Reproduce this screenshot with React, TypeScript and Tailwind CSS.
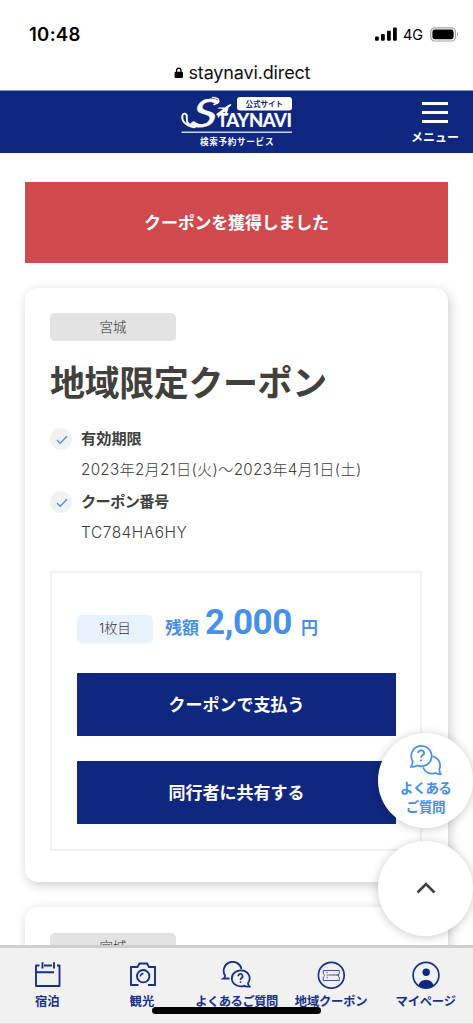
import type { ReactNode } from 'react'

const jp = "font-['Noto_Sans_CJK_JP',sans-serif]"

function StatusBar() {
  return (
    <div className="h-[90px] flex flex-col font-['Inter',sans-serif] text-black">
      <div className="h-[54px] pt-[14px] pl-[29px] pr-[14px] flex justify-between items-center">
        <span className="text-[18.5px] leading-[24px] font-semibold tracking-[0.3px]">10:48</span>
        <div className="flex items-center">
          <svg width="22" height="14" viewBox="0 0 22 14" fill="#000">
            <rect x="0" y="9.5" width="3.8" height="4.2" rx="1" />
            <rect x="6" y="7" width="3.8" height="6.7" rx="1" />
            <rect x="12" y="3.8" width="3.8" height="9.9" rx="1" />
            <rect x="18" y="0.4" width="3.8" height="13.3" rx="1" />
          </svg>
          <span className="mt-px ml-[6px] w-[20px] text-[14.5px] leading-[20px]">4G</span>
          <svg className="ml-[7px]" width="29" height="15" viewBox="0 0 29 15">
            <rect x="0.8" y="0.8" width="24.6" height="13.2" rx="4" fill="none" stroke="#a3a3a3" strokeWidth="1.2" />
            <rect x="2.4" y="2.5" width="21.2" height="9.8" rx="2.4" fill="#000" />
            <path d="M27 5.2c1.4.6 1.4 3.8 0 4.4z" fill="#a3a3a3" />
          </svg>
        </div>
      </div>
      <div className="h-[36px] flex justify-center items-center pl-[20px]">
        <svg className="mt-[2px] mr-[5px]" width="10" height="12" viewBox="0 0 10 12">
          <path d="M2.6 6V3.600a2.200 2.400 0 0 1 4.400 0V6" fill="none" stroke="#000" strokeWidth="1.300" />
          <rect x="0.600" y="4.800" width="8.400" height="6.200" rx="1.200" fill="#000" />
        </svg>
        <span className="mt-px w-[131px] text-[18px] leading-[24px] tracking-[-0.15px] text-[#111]">staynavi.direct</span>
      </div>
    </div>
  )
}

function Logo() {
  return (
    <svg width="114" height="56" viewBox="0 0 114 56" overflow="visible">
      <g fill="none" stroke="#fff" strokeLinecap="round" strokeLinejoin="round">
        <path d="M14 32.300C6 31 1.800 26 2.200 21.500C2.800 17 7.500 18 6.800 23C6.400 27 8.500 31 15 32" strokeWidth="1.900" />
        <path d="M34 9.500C40.500 8 40.500 2.500 32.500 2.500" strokeWidth="1.500" />
      </g>
      <text transform="translate(9.500 32) skewX(-10) scale(1.320 1)" fill="#fff" stroke="#fff" strokeWidth="0.300" fontFamily="Lato" fontStyle="italic" fontWeight="400" fontSize="39">S</text>
      <path d="M36 19.500L47.500 10.500C49 9.500 51 8.800 51.300 9.500C51.500 10.200 50 11.500 48.500 12.800L46.500 20.500L44.800 21L44.800 16.500L40 20L39 22.500L37.800 22.500L37.800 20.500Z M37.500 13.500L39 12.500L46 12.300L44 14Z" fill="#fff" />
      <text x="37" y="32" fill="#fff" stroke="#fff" strokeWidth="0.200" fontFamily="Lato" fontWeight="700" fontSize="18.500" textLength="75" lengthAdjust="spacing">TAYNAVI</text>
      <rect x="57" y="2" width="55" height="13.500" rx="3" fill="#fff" />
      <text x="65.500" y="11.800" fill="#10277f" fontFamily="Noto Sans CJK JP" fontWeight="700" fontSize="7.500" textLength="37.500">公式サイト</text>
      <rect x="1.500" y="36.600" width="110.500" height="1.200" fill="#fff" />
      <text x="20" y="50" fill="#fff" fontFamily="Noto Sans CJK JP" fontWeight="700" fontSize="8.600" textLength="73.500">検索予約サービス</text>
    </svg>
  )
}

function Header() {
  return (
    <header className="h-[63px] bg-[#10277f] border-t border-[#8793bf] flex justify-between">
      <div className="pt-[4px] pl-[180px]"><Logo /></div>
      <div className="flex flex-col items-center pt-[11px] w-[76px]">
        <div className="h-[20.500px] w-[26px] flex flex-col justify-between">
          <div className="h-[2.500px] bg-white" />
          <div className="h-[2.500px] bg-white" />
          <div className="h-[2.500px] bg-white" />
        </div>
        <span className="mt-[4px] text-[12px] leading-[20px] font-bold text-white whitespace-nowrap">メニュー</span>
      </div>
    </header>
  )
}

function InfoRow({ title, children }: { title: ReactNode; children: ReactNode }) {
  return (
    <div className="h-[63px] flex">
      <div className="mt-[6px] w-[22px] h-[22px] shrink-0 rounded-full bg-[#f1f1f1] flex items-center justify-center">
        <svg width="12" height="10" viewBox="0 0 12 10" className="mt-[2px] ml-px">
          <path d="M1 5L4.200 8.200L11 1.200" fill="none" stroke="#4690ea" strokeWidth="1.300" />
        </svg>
      </div>
      <div className="ml-[9px] whitespace-nowrap">
        <div className="h-[31px] text-[15.200px] leading-[31px] font-bold">{title}</div>
        <div className="h-[31px] leading-[31px] text-[#40403c]">{children}</div>
      </div>
    </div>
  )
}

function PrefBadge() {
  return (
    <div className="w-[126px] h-[28px] rounded-[5px] bg-[#e3e3e3] text-center text-[13.500px] leading-[27px] font-light text-[#333]">
      宮城
    </div>
  )
}

function CouponCard() {
  return (
    <section className="h-[594px] rounded-[13px] bg-white shadow-[2px_3px_12px_rgba(0,0,0,0.2)] pt-[25px] px-[25px] text-[#40403c]">
      <PrefBadge />
      <h1 className="mt-[14px] h-[52px] text-[35px] leading-[52px] tracking-[-0.400px] font-bold whitespace-nowrap">
        地域限定クーポン
      </h1>
      <div className="mt-[15px]">
        <InfoRow title="有効期限">
          <span className="font-['Inter','Noto_Sans_CJK_JP',sans-serif] font-light text-[15.200px] tracking-[0.310px]">
            2023年2月21日(火)〜2023年4月1日(土)
          </span>
        </InfoRow>
        <InfoRow title={<span className="tracking-[-0.600px]">クーポン番号</span>}>
          <span className="font-['Inter','Noto_Sans_CJK_JP',sans-serif] font-light text-[15.500px] tracking-[0.500px]">TC784HA6HY</span>
        </InfoRow>
      </div>
      <div className="mt-[23px] w-[372px] h-[280px] border-2 border-[#f1f1f1] pt-[22px] pl-[25px]">
        <div className="h-[54px] flex items-end text-[#4690ea] font-bold whitespace-nowrap">
          <div className="mb-[6px] w-[76px] h-[28px] rounded-[5px] bg-[#e8f2fc] text-center font-['Inter','Noto_Sans_CJK_JP',sans-serif] text-[13.300px] leading-[27px] font-light text-[#333]">
            1枚目
          </div>
          <span className="ml-[12px] mb-px w-[40px] text-[17px] leading-[42px]">残額</span>
          <span className="w-[96px] font-['Roboto',sans-serif] text-[35px] leading-[52px] tracking-[-0.400px]">2,000</span>
          <span className="mb-px text-[17px] leading-[42px]">円</span>
        </div>
        <button className="mt-[24px] block w-[319px] h-[63px] bg-[#10277f] text-white text-[17px] leading-[60px] font-bold pb-[2px]">
          クーポンで支払う
        </button>
        <button className="mt-[25px] block w-[319px] h-[63px] bg-[#10277f] text-white text-[17px] leading-[60px] font-bold pb-[2px]">
          同行者に共有する
        </button>
      </div>
    </section>
  )
}

function ChatIcon() {
  return (
    <svg width="34" height="32" viewBox="0 0 34 32" fill="none" stroke="#4690ea" strokeWidth="1.700" strokeLinejoin="round">
      <path d="M3.800 16.500A10.200 10.200 0 1 1 8.500 20.500C6.500 21.600 4.500 22 1.700 22C3 20.500 3.500 18.500 3.800 16.500Z" />
      <path d="M23.500 11.300A9.300 9.300 0 0 1 30.300 24.200C30.300 26 30.800 27.600 32 29.200C29.500 29.300 27.800 28.800 26.300 28A9.500 9.500 0 0 1 14 22.500" />
      <path d="M9.200 8.200A2.900 2.700 0 1 1 13 10.600Q12 11.200 12 12.800" strokeWidth="1.800" />
      <circle cx="12" cy="15.500" r="0.500" fill="#4690ea" strokeWidth="1.200" />
    </svg>
  )
}

function FloatingButtons() {
  return (
    <div className="absolute left-[378px] top-[733px] flex flex-col gap-[13px]">
      <button className="w-[95px] h-[95px] rounded-full bg-white shadow-[0_1px_10px_rgba(0,0,0,0.22)] flex flex-col items-center pt-[12px] text-[13.500px] leading-[19px] font-bold text-[#4690ea]">
        <ChatIcon />
        <span className="mt-px tracking-[-0.800px]">よくある</span>
        <span className="tracking-[-0.300px]">ご質問</span>
      </button>
      <button className="w-[95px] h-[95px] rounded-full bg-white shadow-[0_1px_10px_rgba(0,0,0,0.22)] flex items-center justify-center">
        <svg width="20" height="12" viewBox="0 0 20 12" className="mb-px">
          <path d="M1.500 10.500L10 2L18.500 10.500" fill="none" stroke="#40403c" strokeWidth="2.600" />
        </svg>
      </button>
    </div>
  )
}

function TabItem({ label, labelClass, children }: { label: string; labelClass: string; children: ReactNode }) {
  return (
    <a className="flex flex-col items-center pt-[13px]">
      <svg width="30" height="30" viewBox="0 0 30 30" fill="none" stroke="#16308c" strokeWidth="1.900">
        {children}
      </svg>
      <span className={`text-[12.300px] leading-[20px] font-bold text-[#16308c] whitespace-nowrap ${labelClass}`}>{label}</span>
    </a>
  )
}

function TabBar() {
  return (
    <nav className="absolute left-0 top-[945px] w-[473px] h-[79px] border-t-[3px] border-[#cfcfcf] bg-[#f1f1f1] grid grid-cols-5">
      <TabItem label="宿泊" labelClass="">
        <path d="M7.500 4.500H4V25H27.500V4.500H25M12 4.500H20M10.500 1.300V7.500M22 1.300V7.500M4 11.200H22" strokeLinejoin="round" />
      </TabItem>
      <TabItem label="観光" labelClass="">
        <path d="M11.500 24H4V6H10.500L12.500 2.500H20L22 6H28V24H21" />
        <circle cx="16.200" cy="15.200" r="6.200" />
        <path d="M13.300 15.500A3.500 3.500 0 0 1 16.500 12.500" strokeWidth="1.500" />
      </TabItem>
      <TabItem label="よくあるご質問" labelClass="tracking-[-0.500px]">
        <path d="M8.500 17.500H2.500Q4.200 16.500 4 14.500A9 9 0 1 1 20.500 8" strokeWidth="1.800" />
        <path d="M27 22A8.900 8 0 1 0 23 24.800C24.500 25.600 26.500 25.800 28.500 25.500Q27 24 27 22Z" strokeWidth="1.800" />
        <path d="M17.200 15.200A2.200 2.200 0 1 1 20.200 17.200Q19.500 17.500 19.500 19" strokeWidth="1.700" />
        <circle cx="19.500" cy="21" r="0.600" fill="#16308c" strokeWidth="0.800" />
      </TabItem>
      <TabItem label="地域クーポン" labelClass="tracking-[-0.200px]">
        <circle cx="15.300" cy="14.200" r="12.900" strokeWidth="1.700" />
        <path d="M7.300 9.500H23.300V12.800Q22.100 13.500 22.100 14.500Q22.100 15.500 23.300 16.200V19.500H7.300V16.200Q8.500 15.500 8.500 14.500Q8.500 13.500 7.300 12.800Z" strokeWidth="0.800" />
        <path d="M11.200 10.800V18.300" strokeWidth="0.700" strokeDasharray="1.500 1" />
        <text x="12.300" y="15.400" fontFamily="Inter" fontSize="2.400" fontWeight="700" fill="#16308c" stroke="none">COUPON</text>
      </TabItem>
      <TabItem label="マイページ" labelClass="tracking-[-0.200px]">
        <circle cx="15" cy="14.200" r="12.900" strokeWidth="1.700" />
        <circle cx="15.200" cy="11.300" r="3.700" fill="#10277f" stroke="none" />
        <path d="M7.500 24.500A7.600 7 0 0 1 22.500 24.500A12.500 12.500 0 0 1 7.500 24.500Z" fill="#10277f" stroke="none" />
      </TabItem>
      <div className="absolute left-[152px] top-[59px] w-[169px] h-[7px] rounded-full bg-black" />
      <div className="absolute left-0 bottom-0 w-full h-px bg-[#dedede]" />
    </nav>
  )
}

export default function App() {
  return (
    <div className={`relative w-[473px] h-[1024px] overflow-hidden bg-white ${jp}`}>
      <StatusBar />
      <Header />
      <main className="px-[25px] pt-[29px]">
        <div className="h-[81px] bg-[#d0494d] text-white text-center text-[17px] leading-[79px] font-bold tracking-[-0.200px]">
          クーポンを獲得しました
        </div>
        <div className="mt-[25px] flex flex-col gap-[25px]">
          <CouponCard />
          <section className="h-[200px] rounded-[13px] bg-white shadow-[2px_3px_12px_rgba(0,0,0,0.2)] pt-[26px] px-[25px]">
            <PrefBadge />
          </section>
        </div>
      </main>
      <FloatingButtons />
      <TabBar />
    </div>
  )
}
